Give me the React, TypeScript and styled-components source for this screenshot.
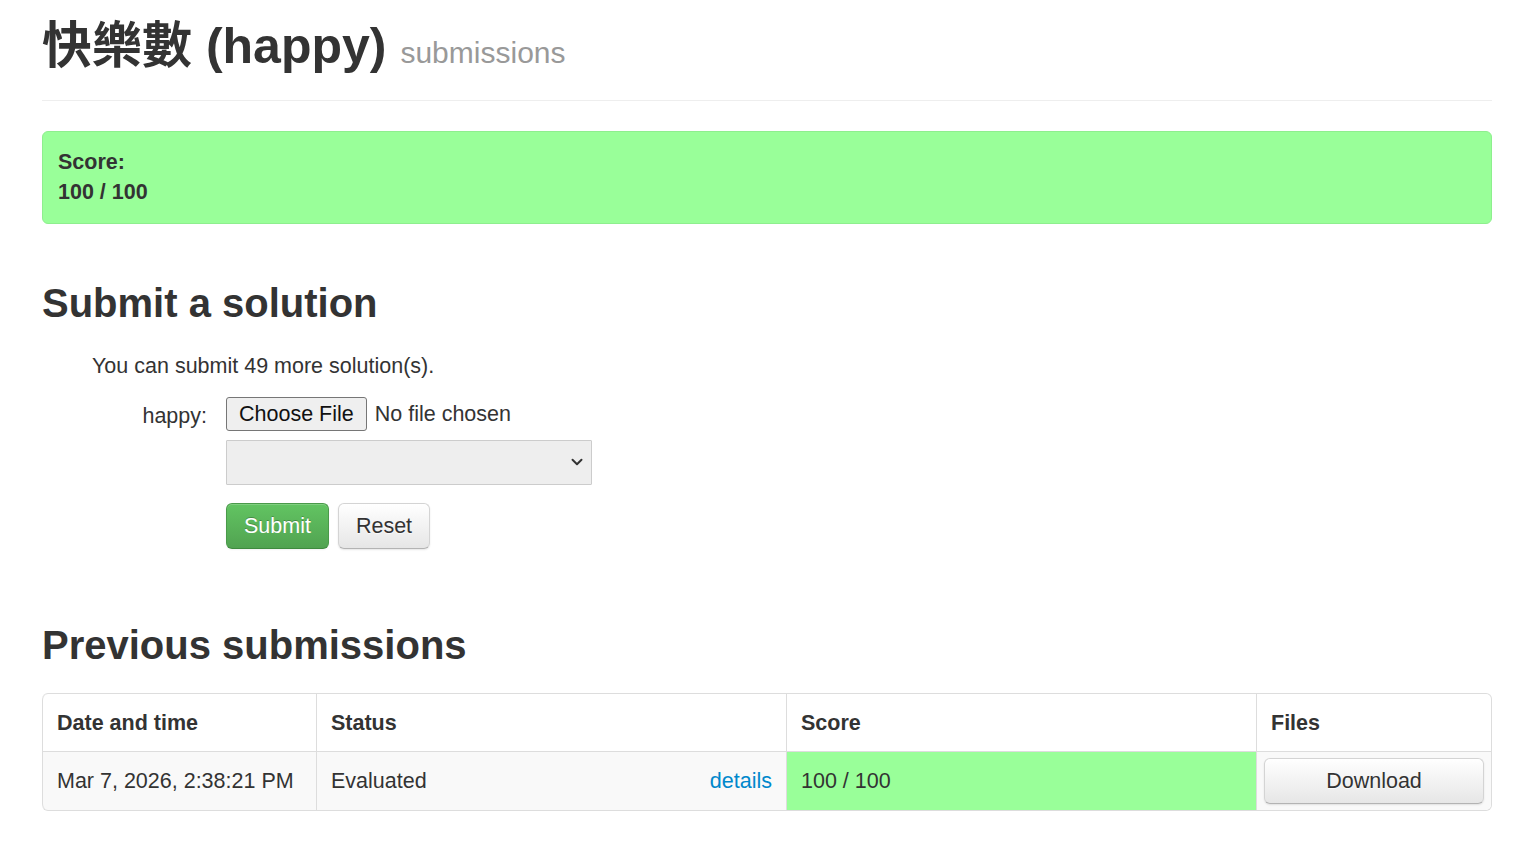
import React from "react";
import styled, { createGlobalStyle } from "styled-components";
import { ChevronDown } from "lucide-react";

const GlobalStyle = createGlobalStyle`
  *, *::before, *::after { box-sizing: border-box; }
  html, body { margin: 0; padding: 0; background: #fff; }
  body {
    font-family: "Liberation Sans", "Noto Sans CJK TC", Arial, sans-serif;
    font-size: 21.5px;
    line-height: 30px;
    color: #333;
  }
`;

const Page = styled.div`
  margin: 0 34px 0 42px;
  padding-bottom: 40px;
`;

const PageHeader = styled.header`
  padding: 16px 0 17px;
  border-bottom: 1px solid #eee;
`;

const Title = styled.h1`
  margin: 0;
  font-size: 50px;
  line-height: 60px;
  font-weight: bold;
  color: #333;
`;

const TitleSmall = styled.small`
  font-size: 30px;
  font-weight: normal;
  color: #999;
  margin-left: 14px;
`;

const ScoreAlert = styled.div`
  margin-top: 30px;
  padding: 15px 15px 16px;
  background: rgb(153, 255, 153);
  border: 1px solid #8eef8e;
  border-radius: 6px;
  font-weight: bold;
  color: #333;
`;

const SectionTitle = styled.h2<{ $top: number }>`
  margin: ${(p) => p.$top}px 0 0;
  font-size: 40px;
  line-height: 48px;
  font-weight: bold;
  color: #333;
`;

const Info = styled.p`
  margin: 24px 0 0;
  padding-left: 50px;
`;

const FormGrid = styled.form`
  margin-top: 16px;
  display: grid;
  grid-template-columns: 165px 1fr;
  column-gap: 19px;
  row-gap: 9px;
  align-items: start;
`;

const FieldLabel = styled.label`
  text-align: right;
  padding-top: 4px;
`;

const FileRow = styled.div`
  display: flex;
  align-items: center;
  gap: 8px;
  height: 34px;
`;

const FileButton = styled.button`
  font-family: inherit;
  font-size: 21.5px;
  line-height: 24px;
  height: 34px;
  padding: 0 12px;
  color: #111;
  background: #efefef;
  border: 1px solid #767676;
  border-radius: 3px;
`;

const FileStatus = styled.span`
  color: #333;
`;

const SelectWrap = styled.div`
  grid-column: 2;
  position: relative;
  width: 366px;
  height: 45px;
`;

const LangSelect = styled.select`
  appearance: none;
  width: 100%;
  height: 100%;
  font-family: inherit;
  font-size: 21.5px;
  background: #eee;
  border: 1px solid #ccc;
  border-radius: 1px;
  color: #555;
`;

const SelectArrow = styled.span`
  position: absolute;
  right: 6px;
  top: 13px;
  display: flex;
  pointer-events: none;
  color: #333;
`;

const Actions = styled.div`
  grid-column: 2;
  display: flex;
  gap: 9px;
  margin-top: 9px;
`;

const Btn = styled.button<{ $variant?: "success" | "default"; $block?: boolean }>`
  font-family: inherit;
  font-size: 21.5px;
  line-height: 30px;
  padding: 7px 17px;
  border-radius: 6px;
  cursor: pointer;
  width: ${(p) => (p.$block ? "100%" : "auto")};
  ${(p) =>
    p.$variant === "success"
      ? `
    color: #fff;
    text-shadow: 0 -1px 0 rgba(0,0,0,0.25);
    background: linear-gradient(to bottom, #62c462, #51a351);
    border: 1px solid #4a9a4a;
    border-bottom-color: #3f8a3f;
    box-shadow: inset 0 1px 0 rgba(255,255,255,0.2), 0 1px 2px rgba(0,0,0,0.05);
  `
      : `
    color: #333;
    text-shadow: 0 1px 1px rgba(255,255,255,0.75);
    background: linear-gradient(to bottom, #ffffff, #e6e6e6);
    border: 1px solid #d4d4d4;
    border-bottom-color: #b3b3b3;
    box-shadow: inset 0 1px 0 rgba(255,255,255,0.2), 0 1px 2px rgba(0,0,0,0.1);
  `}
`;

const Table = styled.table`
  margin-top: 24px;
  width: 100%;
  table-layout: fixed;
  border-collapse: separate;
  border-spacing: 0;
  border: 1px solid #ddd;
  border-left: 0;
  border-radius: 6px;
`;

const Th = styled.th<{ $w?: number }>`
  width: ${(p) => (p.$w ? `${p.$w}px` : "auto")};
  text-align: left;
  font-weight: bold;
  padding: 14px 14px 13px;
  line-height: 30px;
  border-left: 1px solid #ddd;
  vertical-align: top;
  &:first-child { border-top-left-radius: 6px; }
  &:last-child { border-top-right-radius: 6px; }
`;

const Td = styled.td<{ $score?: boolean; $tight?: boolean }>`
  padding: ${(p) => (p.$tight ? "6px 7px" : "14px")};
  line-height: 30px;
  border-left: 1px solid #ddd;
  border-top: 1px solid #ddd;
  background: ${(p) => (p.$score ? "rgb(153, 255, 153)" : "#f9f9f9")};
  vertical-align: middle;
  &:first-child { border-bottom-left-radius: 6px; }
  &:last-child { border-bottom-right-radius: 6px; }
`;

const DetailsLink = styled.a`
  float: right;
  color: #0088cc;
  text-decoration: none;
`;

export default function App() {
  return (
    <>
      <GlobalStyle />
      <Page>
        <PageHeader>
          <Title>
            快樂數 (happy)<TitleSmall>submissions</TitleSmall>
          </Title>
        </PageHeader>

        <ScoreAlert>
          <div>Score:</div>
          <div>100 / 100</div>
        </ScoreAlert>

        <SectionTitle $top={55}>Submit a solution</SectionTitle>
        <Info>You can submit 49 more solution(s).</Info>

        <FormGrid onSubmit={(e) => e.preventDefault()}>
          <FieldLabel>happy:</FieldLabel>
          <FileRow>
            <FileButton type="button">Choose File</FileButton>
            <FileStatus>No file chosen</FileStatus>
          </FileRow>
          <SelectWrap>
            <LangSelect defaultValue="">
              <option value=""></option>
            </LangSelect>
            <SelectArrow>
              <ChevronDown size={18} strokeWidth={2.6} />
            </SelectArrow>
          </SelectWrap>
          <Actions>
            <Btn type="submit" $variant="success">Submit</Btn>
            <Btn type="reset">Reset</Btn>
          </Actions>
        </FormGrid>

        <SectionTitle $top={72}>Previous submissions</SectionTitle>
        <Table>
          <thead>
            <tr>
              <Th $w={274}>Date and time</Th>
              <Th $w={470}>Status</Th>
              <Th $w={470}>Score</Th>
              <Th>Files</Th>
            </tr>
          </thead>
          <tbody>
            <tr>
              <Td>Mar 7, 2026, 2:38:21 PM</Td>
              <Td>
                Evaluated
                <DetailsLink href="#">details</DetailsLink>
              </Td>
              <Td $score>100 / 100</Td>
              <Td $tight>
                <Btn type="button" $block>Download</Btn>
              </Td>
            </tr>
          </tbody>
        </Table>
      </Page>
    </>
  );
}
